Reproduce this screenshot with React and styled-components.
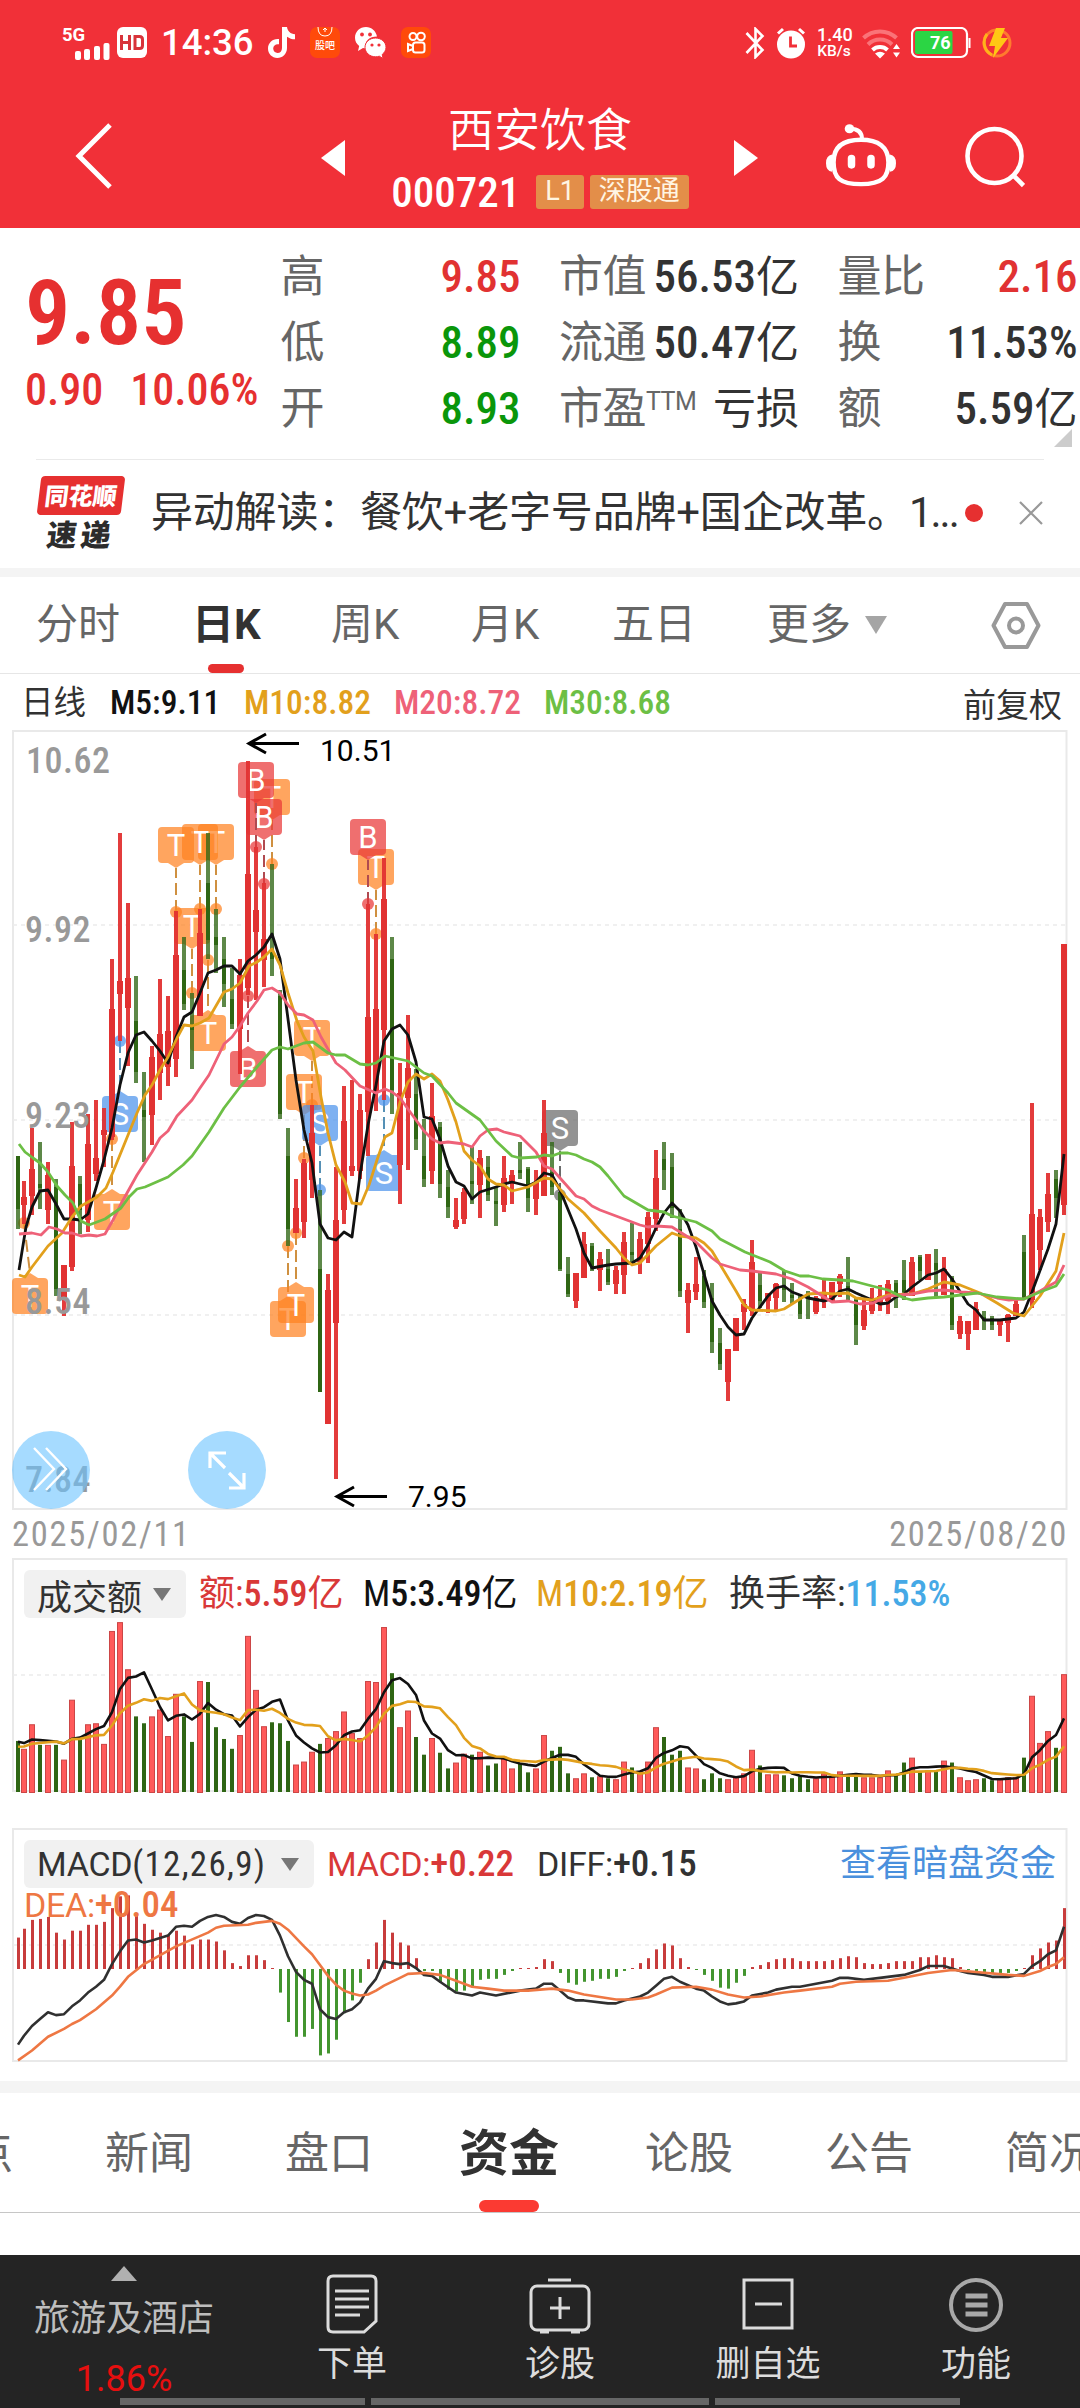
import React, { useState } from "react";
import styled, { createGlobalStyle } from "styled-components";

const GlobalStyle = createGlobalStyle`
  * { box-sizing: border-box; }
  body {
    margin: 0;
    background: #fff;
    font-family: "Roboto", "Noto Sans CJK SC", sans-serif;
  }
`;

const UP = "#e13232";
const DOWN = "#2f6614";

// one row per day: [rising, high, body top, body bottom, low]
const candles = [
  [0, 1156, 1156, 1209, 1229], [1, 1181, 1197, 1205, 1224], [1, 1128, 1169, 1196, 1215], [0, 1142, 1184, 1188, 1209],
  [1, 1162, 1175, 1210, 1224], [0, 1179, 1187, 1289, 1296], [1, 1265, 1265, 1298, 1316], [1, 1122, 1166, 1267, 1271],
  [0, 1176, 1184, 1210, 1234], [1, 1114, 1144, 1220, 1232], [1, 1100, 1158, 1174, 1181], [1, 1108, 1130, 1135, 1167],
  [1, 959, 1009, 1137, 1140], [1, 833, 981, 994, 1041], [1, 903, 978, 1008, 1066], [0, 976, 1021, 1072, 1083],
  [0, 1072, 1110, 1117, 1162], [1, 1046, 1057, 1115, 1145], [1, 979, 1034, 1073, 1100], [1, 996, 1031, 1067, 1086],
  [1, 911, 955, 1059, 1077], [0, 937, 970, 1004, 1010], [0, 993, 1025, 1030, 1069], [1, 909, 933, 1016, 1016],
  [0, 833, 883, 940, 959], [0, 909, 937, 945, 973], [0, 937, 959, 984, 1007], [0, 968, 999, 1024, 1029],
  [1, 959, 975, 1029, 1074], [1, 761, 874, 988, 995], [1, 847, 910, 932, 1000], [1, 883, 939, 960, 987],
  [0, 864, 950, 959, 976], [0, 990, 996, 1114, 1119], [0, 1128, 1156, 1229, 1246], [1, 1179, 1208, 1233, 1233],
  [1, 1159, 1163, 1222, 1238], [1, 1105, 1133, 1180, 1198], [0, 1190, 1269, 1392, 1392], [1, 1274, 1290, 1424, 1424],
  [1, 1167, 1220, 1323, 1479], [1, 1086, 1121, 1210, 1224], [1, 1080, 1166, 1171, 1176], [1, 1094, 1110, 1171, 1179],
  [1, 904, 1017, 1112, 1156], [1, 934, 1009, 1093, 1111], [1, 858, 899, 1030, 1100], [0, 937, 959, 1090, 1114],
  [1, 1063, 1093, 1165, 1204], [1, 1015, 1068, 1098, 1170], [0, 1069, 1094, 1139, 1150], [0, 1119, 1156, 1179, 1187],
  [1, 1083, 1116, 1171, 1184], [0, 1122, 1127, 1184, 1198], [0, 1170, 1187, 1207, 1218], [1, 1198, 1220, 1227, 1229],
  [1, 1188, 1192, 1219, 1224], [0, 1147, 1181, 1184, 1204], [1, 1150, 1158, 1185, 1218], [0, 1156, 1167, 1195, 1201],
  [0, 1187, 1201, 1204, 1226], [1, 1156, 1178, 1205, 1212], [1, 1170, 1175, 1184, 1204], [0, 1142, 1170, 1173, 1179],
  [0, 1167, 1169, 1198, 1212], [1, 1170, 1182, 1199, 1215], [1, 1100, 1133, 1196, 1196], [0, 1142, 1172, 1187, 1195],
  [0, 1192, 1192, 1269, 1271], [0, 1257, 1274, 1294, 1297], [1, 1273, 1273, 1301, 1308], [1, 1232, 1244, 1278, 1278],
  [0, 1243, 1246, 1266, 1271], [1, 1252, 1259, 1270, 1291], [0, 1249, 1269, 1282, 1285], [1, 1266, 1270, 1284, 1294],
  [1, 1232, 1242, 1275, 1294], [0, 1223, 1252, 1255, 1262], [1, 1232, 1239, 1262, 1274], [1, 1212, 1217, 1244, 1263],
  [1, 1150, 1178, 1219, 1231], [0, 1142, 1159, 1170, 1190], [0, 1153, 1167, 1208, 1218], [0, 1209, 1229, 1291, 1297],
  [1, 1283, 1290, 1303, 1333], [1, 1257, 1284, 1292, 1300], [0, 1270, 1276, 1302, 1308], [0, 1283, 1298, 1342, 1353],
  [0, 1328, 1343, 1364, 1370], [1, 1349, 1349, 1382, 1401], [1, 1318, 1318, 1351, 1351], [1, 1299, 1304, 1312, 1330],
  [1, 1240, 1262, 1311, 1316], [0, 1271, 1285, 1301, 1308], [1, 1293, 1293, 1301, 1313], [1, 1283, 1284, 1298, 1310],
  [0, 1271, 1285, 1290, 1302], [0, 1283, 1295, 1298, 1304], [0, 1294, 1298, 1314, 1319], [0, 1291, 1295, 1299, 1319],
  [1, 1296, 1298, 1312, 1314], [1, 1280, 1292, 1302, 1308], [1, 1282, 1282, 1302, 1302], [1, 1274, 1276, 1284, 1297],
  [0, 1257, 1286, 1289, 1300], [0, 1298, 1300, 1325, 1345], [1, 1300, 1310, 1326, 1330], [1, 1288, 1298, 1311, 1314],
  [1, 1285, 1296, 1304, 1311], [1, 1280, 1284, 1301, 1314], [0, 1280, 1283, 1296, 1308], [0, 1260, 1280, 1292, 1300],
  [1, 1257, 1262, 1296, 1296], [0, 1255, 1257, 1271, 1280], [1, 1254, 1254, 1280, 1280], [0, 1249, 1263, 1270, 1298],
  [1, 1257, 1269, 1295, 1295], [0, 1276, 1278, 1325, 1330], [1, 1316, 1321, 1334, 1339], [1, 1321, 1321, 1334, 1350],
  [1, 1302, 1309, 1330, 1330], [0, 1311, 1317, 1321, 1330], [0, 1316, 1318, 1325, 1330], [1, 1320, 1321, 1325, 1336],
  [1, 1314, 1315, 1323, 1342], [1, 1300, 1304, 1316, 1316], [0, 1235, 1252, 1298, 1298], [1, 1103, 1214, 1300, 1308],
  [1, 1209, 1217, 1250, 1270], [1, 1173, 1194, 1222, 1232], [0, 1170, 1179, 1198, 1218], [1, 944, 944, 1205, 1215],
];

const priceLines = [
  ["#111", "19,1270 26,1227 32,1207 40,1191 48,1190 56,1204 64,1219 72,1219 80,1220 88,1214 96,1188 104,1160 112,1128 120,1085 128,1053 136,1035 144,1032 152,1041 160,1051 168,1063 176,1037 184,1017 192,1012 200,993 208,973 216,970 224,966 232,966 240,974 248,961 256,955 264,947 272,934 280,959 288,1019 296,1080 304,1130 312,1163 320,1224 328,1238 336,1240 344,1232 352,1237 360,1175 368,1125 376,1085 384,1041 392,1029 400,1025 408,1035 416,1062 424,1117 432,1119 440,1139 448,1166 456,1182 464,1186 472,1199 480,1192 496,1187 504,1184 512,1182 520,1184 528,1186 536,1182 544,1173 552,1175 560,1190 576,1229 584,1253 592,1268 608,1265 616,1264 632,1263 640,1258 648,1245 656,1228 664,1213 672,1203 680,1211 688,1225 696,1247 704,1274 712,1301 720,1315 728,1327 736,1335 744,1334 752,1318 760,1307 768,1296 776,1288 784,1286 792,1292 808,1298 824,1301 832,1299 840,1291 848,1289 856,1293 872,1300 880,1304 888,1303 896,1297 904,1294 912,1287 928,1275 936,1273 944,1269 952,1279 968,1304 976,1310 984,1320 1000,1320 1016,1318 1024,1312 1032,1292 1048,1249 1056,1224 1064,1154"],
  ["#e2a01c", "19,1275 25,1277 32,1267 48,1246 62,1233 72,1217 81,1206 97,1197 106,1188 113,1172 137,1113 145,1095 152,1085 160,1070 168,1057 177,1038 184,1025 192,1026 200,1023 209,1018 224,992 232,989 240,983 249,966 257,962 264,957 272,949 280,965 288,993 297,1021 304,1037 313,1051 321,1097 328,1133 336,1165 345,1182 352,1203 361,1204 369,1185 377,1160 385,1137 392,1133 400,1102 408,1082 416,1074 424,1079 432,1074 440,1081 448,1100 456,1122 464,1151 472,1160 480,1166 488,1179 496,1184 504,1185 512,1191 528,1187 544,1178 552,1179 560,1189 568,1199 584,1213 600,1231 616,1248 624,1258 632,1265 640,1263 656,1246 672,1233 680,1236 696,1238 704,1243 712,1251 736,1291 744,1305 752,1310 776,1311 784,1309 800,1299 808,1294 824,1293 832,1294 848,1293 856,1298 872,1300 888,1295 912,1294 928,1289 944,1282 960,1285 980,1293 997,1303 1013,1313 1024,1316 1040,1296 1056,1271 1064,1233"],
  ["#ee6178", "19,1234 32,1233 41,1235 49,1227 57,1229 65,1233 72,1233 81,1236 89,1235 97,1236 105,1234 113,1220 122,1202 137,1175 152,1152 160,1138 168,1131 177,1116 192,1100 200,1088 209,1075 224,1044 232,1037 240,1026 248,1013 257,1001 264,990 272,988 280,993 288,1005 297,1014 304,1015 313,1020 321,1037 336,1063 345,1070 360,1086 376,1093 385,1089 392,1092 400,1098 424,1131 432,1139 440,1143 448,1142 464,1144 472,1147 480,1136 488,1130 497,1129 504,1132 520,1136 536,1152 544,1166 552,1169 560,1178 576,1196 584,1199 592,1206 600,1210 616,1216 632,1222 640,1225 648,1227 656,1226 672,1227 696,1242 712,1258 720,1264 740,1270 752,1271 776,1274 792,1279 808,1287 824,1297 832,1302 848,1301 860,1304 873,1303 888,1296 912,1294 928,1291 944,1290 961,1292 977,1293 997,1298 1009,1300 1024,1299 1040,1291 1056,1282 1064,1265"],
  ["#6cbf45", "19,1144 25,1152 33,1158 40,1163 48,1172 57,1186 65,1195 73,1203 81,1221 89,1225 97,1222 105,1219 121,1208 129,1197 137,1189 145,1187 168,1177 183,1165 192,1156 209,1132 224,1108 240,1087 257,1067 272,1050 280,1047 288,1049 304,1043 313,1042 328,1053 336,1055 345,1055 360,1064 368,1065 376,1063 385,1056 408,1061 424,1073 432,1076 448,1093 456,1103 480,1120 496,1141 512,1156 520,1158 537,1157 544,1155 552,1156 560,1153 568,1153 576,1155 584,1159 592,1162 600,1167 608,1176 624,1196 648,1210 664,1212 672,1216 688,1220 696,1222 712,1231 720,1239 745,1252 760,1258 770,1262 785,1271 800,1276 809,1276 823,1279 840,1280 853,1281 872,1286 888,1290 896,1294 904,1298 912,1300 928,1298 944,1297 961,1295 977,1293 997,1297 1024,1299 1040,1292 1056,1286 1064,1274"],
];

// trade markers: [letter, x of the box centre, top of the box, x and y of the dot]
const markers = [
  ["G", 560, 1110, 560, 1195], ["T", 376, 849, 376, 934], ["B", 368, 819, 368, 904],
  ["S", 384, 1155, 384, 1100], ["T", 312, 1020, 312, 1105], ["T", 304, 1074, 304, 1158],
  ["S", 320, 1105, 320, 1190], ["T", 272, 779, 272, 864], ["B", 264, 799, 264, 884],
  ["B", 256, 762, 256, 847], ["B", 248, 1051, 248, 996], ["T", 216, 824, 216, 909],
  ["T", 200, 824, 200, 909], ["T", 192, 908, 192, 993], ["T", 176, 827, 176, 912],
  ["T", 208, 1015, 208, 960], ["S", 120, 1096, 120, 1041], ["T", 112, 1194, 112, 1139],
  ["T", 30, 1278, 24, 1223], ["T", 288, 1301, 288, 1246], ["T", 296, 1287, 296, 1233],
];

const markerColors = {
  T: ["#ff8322", "#cf9040"],
  B: ["#ea3838", "#b04a50"],
  S: ["#4d94ec", "#5590b5"],
  G: ["#6a6a6a", "#6a6a6a"],
};

const volumes = [
  52, 44, 69, 48, 48, 48, 33, 94, 54, 69, 70, 49, 164, 173, 125, 77, 70, 77, 84, 57, 100, 77, 51, 113, 112, 66, 54, 44,
  58, 159, 104, 67, 71, 70, 52, 28, 31, 41, 49, 55, 62, 82, 60, 55, 113, 112, 168, 121, 66, 83, 56, 38, 55, 40, 24, 30,
  39, 38, 41, 27, 29, 36, 24, 29, 20, 24, 58, 42, 46, 19, 14, 19, 15, 16, 14, 13, 31, 25, 21, 31, 66, 56, 38, 42, 25, 24,
  13, 19, 14, 13, 16, 19, 43, 27, 18, 18, 17, 14, 16, 13, 14, 19, 16, 21, 18, 18, 15, 15, 15, 22, 18, 30, 35, 21, 22, 21,
  32, 30, 15, 12, 13, 14, 12, 14, 15, 15, 35, 98, 50, 62, 45, 120,
];
const earlierVolumes = [41, 41, 41, 41, 41, 51, 51, 51, 51];

const macdBars = [
  32, 41, 50, 51, 53, 37, 30, 39, 39, 45, 45, 48, 62, 74, 75, 55, 46, 40, 37, 35, 39, 34, 25, 30, 30, 28, 19, 6, 3, 14, 14,
  9, 1, -24, -54, -69, -69, -61, -88, -86, -72, -45, -32, -14, 10, 27, 50, 37, 27, 24, 11, -2, -2, -14, -21, -23, -22, -18,
  -11, -10, -10, -6, -2, 1, 1, 2, 10, 8, -4, -14, -16, -13, -12, -10, -10, -8, -2, 1, 6, 11, 20, 26, 24, 11, 2, -1, -6,
  -12, -19, -20, -14, -7, 2, 4, 7, 10, 11, 11, 8, 8, 8, 8, 9, 11, 13, 12, 6, 5, 5, 6, 8, 8, 8, 12, 12, 14, 12, 11, 2, -1,
  -2, -3, -4, -4, -4, -2, 1, 14, 21, 27, 29, 62,
];

// [day, value] pairs
const diff = [
  [0, -77], [1, -68], [2, -58], [3, -51], [4, -44], [5, -47], [6, -46], [7, -38], [8, -32], [9, -24], [10, -18], [11, -11],
  [12, 5], [13, 18], [14, 29], [15, 30], [16, 27], [17, 29], [19, 34], [20, 43], [21, 44], [22, 43], [23, 49], [24, 53],
  [25, 55], [26, 53], [27, 48], [28, 46], [29, 52], [30, 55], [31, 54], [32, 50], [33, 34], [34, 13], [35, -3], [36, -11],
  [37, -15], [38, -41], [39, -49], [40, -51], [41, -44], [42, -41], [43, -34], [44, -20], [45, -10], [46, 8], [47, 6],
  [48, 5], [49, 6], [50, 1], [51, -6], [52, -7], [53, -13], [55, -24], [57, -27], [58, -24], [60, -27], [63, -22],
  [65, -20], [66, -15], [67, -15], [68, -22], [69, -29], [70, -32], [71, -32], [74, -35], [75, -35], [76, -32], [78, -28],
  [79, -24], [80, -17], [81, -10], [82, -8], [83, -13], [85, -20], [86, -22], [87, -28], [88, -33], [89, -36], [90, -35],
  [91, -33], [92, -27], [94, -24], [95, -21], [97, -18], [98, -18], [100, -15], [102, -12], [103, -9], [104, -9],
  [106, -11], [108, -9], [111, -6], [113, -1], [114, 3], [116, 3], [118, -2], [119, -4], [121, -6], [122, -8], [124, -8],
  [126, -5], [127, 3], [128, 8], [129, 15], [130, 19], [131, 43],
];
const dea = [
  [0, -93], [2, -83], [4, -69], [6, -61], [7, -56], [8, -52], [10, -41], [12, -27], [13, -18], [14, -8], [16, 5], [20, 23],
  [24, 37], [25, 42], [26, 44], [29, 45], [30, 47], [32, 49], [33, 46], [34, 40], [36, 23], [37, 15], [38, 4], [39, -7],
  [40, -16], [41, -22], [42, -25], [43, -27], [44, -26], [45, -22], [46, -17], [48, -9], [49, -5], [51, -4], [53, -6],
  [55, -12], [57, -18], [59, -20], [61, -22], [64, -22], [67, -20], [69, -22], [71, -26], [75, -31], [77, -31], [79, -29],
  [80, -26], [82, -19], [85, -18], [87, -21], [89, -26], [91, -29], [93, -28], [96, -24], [98, -22], [102, -18],
  [103, -15], [105, -13], [109, -12], [111, -9], [114, -4], [117, -1], [120, -3], [124, -6], [126, -7], [128, -2],
  [129, 2], [130, 5], [131, 12],
];

const PLOT_SCALE = 0.982;

const dayX = (i) => (i === 0 ? 18 : 16 + 8 * i);

const average = (days) => {
  const all = [...earlierVolumes, ...volumes];
  return volumes.map((_, i) => {
    const end = i + earlierVolumes.length + 1;
    return all.slice(end - days, end).reduce((a, b) => a + b, 0) / days;
  });
};

const Page = styled.div`
  width: 1080px;
  height: 2408px;
  overflow: hidden;
  display: flex;
  flex-direction: column;
  background: #fff;
`;

const Header = styled.header`
  height: 228px;
  flex: none;
  background: #f13038;
  color: #fff;
`;

const StatusBar = styled.div`
  height: 85px;
  display: flex;
  align-items: center;
  justify-content: space-between;
  padding: 0 68px 0 62px;
`;

const StatusGroup = styled.div`
  display: flex;
  align-items: center;
  gap: ${(props) => props.$gap}px;
`;

const Clock = styled.span`
  width: 92px;
  font-size: 36.5px;
  font-weight: 500;
  line-height: 40px;
  margin-left: -1px;
  white-space: nowrap;
`;

const NetSpeed = styled.span`
  width: 34px;
  font-size: 15.5px;
  font-weight: 500;
  line-height: 16px;
  text-align: center;
  white-space: nowrap;

  b {
    display: block;
    font-size: 18px;
    font-weight: 500;
    line-height: 17px;
  }
`;

const AppBadge = styled.span`
  width: 30px;
  height: 31px;
  border-radius: 7px;
  background: #ff4a0a;
  display: flex;
  flex-direction: column;
  align-items: center;
  justify-content: space-between;
  font-size: 10px;
  font-weight: 500;
  line-height: 14px;
  overflow: hidden;
  padding-bottom: 5px;
`;

const Nav = styled.nav`
  height: 143px;
  display: grid;
  grid-template-columns: 268px 130px 286px 124px 106px 162px;
  align-items: center;
  padding-bottom: 2px;
`;

const NavButton = styled.div`
  display: flex;
  justify-content: center;
  padding-right: ${(props) => props.$pad || 0}px;
`;

const TitleBlock = styled.div`
  display: flex;
  flex-direction: column;
  align-items: center;
  margin-left: -2px;
`;

const StockName = styled.div`
  font-family: "Noto Sans CJK SC", sans-serif;
  font-size: 46px;
  font-weight: 350;
  line-height: 66px;
`;

const CodeRow = styled.div`
  display: flex;
  align-items: center;
  gap: 6px;
  height: 60px;
  padding-top: 6px;
  white-space: nowrap;
`;

const Code = styled.span`
  font-family: "Roboto Condensed", "Roboto", sans-serif;
  font-size: 43px;
  font-weight: 500;
  margin-right: 10px;
`;

const Badge = styled.span`
  height: 34px;
  padding: 0 ${(props) => props.$pad}px;
  border-radius: 3px;
  background: #e38e49;
  color: #fff5e2;
  font-size: 27px;
  line-height: 33px;
`;

const QuotePanel = styled.section`
  height: 231px;
  flex: none;
  display: grid;
  grid-template-columns: 242px 240px 240px 240px;
  column-gap: 38.5px;
  padding-top: 16px;
  position: relative;
`;

const PriceBlock = styled.div`
  padding-left: 25px;
  font-family: "Roboto Condensed", "Roboto", sans-serif;
  color: #e63030;
`;

const Price = styled.div`
  font-size: 90px;
  font-weight: 600;
  line-height: 106px;
  padding-top: 17px;
`;

const Change = styled.div`
  display: flex;
  gap: 27px;
  font-size: 44px;
  font-weight: 500;
  line-height: 46px;
  white-space: nowrap;
`;

const QuoteColumn = styled.div`
  display: flex;
  flex-direction: column;
`;

const QuoteRow = styled.div`
  height: 66px;
  display: flex;
  align-items: center;
  justify-content: space-between;
  white-space: nowrap;
`;

const QuoteLabel = styled.span`
  font-size: 44px;
  line-height: 60px;
  letter-spacing: -0.5px;
  color: #666;

  sup {
    font-size: 25px;
    line-height: 0;
    vertical-align: 14px;
  }
`;

const QuoteValue = styled.span`
  font-family: "Roboto Condensed", "Roboto", "Noto Sans CJK SC", sans-serif;
  font-size: 45px;
  line-height: 60px;
  font-weight: 500;
  color: ${(props) => props.$color || "#323232"};

  i {
    font-style: normal;
    font-weight: 400;
    font-size: 43px;
  }
`;

const Corner = styled.span`
  position: absolute;
  right: 8px;
  bottom: 12px;
  border-left: 18px solid transparent;
  border-bottom: 18px solid #ccc;
`;

const NewsRow = styled.section`
  height: 109px;
  flex: none;
  margin: 0 36px;
  border-top: 1px solid #eaeaea;
  display: flex;
  align-items: center;
  padding-bottom: 2px;
`;

const NewsLogo = styled.div`
  width: 90px;
  margin-right: 25px;
  display: flex;
  flex-direction: column;
  align-items: center;
  font-family: "Noto Sans CJK SC", sans-serif;
  font-weight: 900;
`;

const LogoTop = styled.span`
  width: 84px;
  height: 39px;
  border-radius: 4px;
  background: #e63030;
  color: #fff;
  font-size: 24px;
  line-height: 37px;
  text-align: center;
  transform: skewX(-7deg);
`;

const LogoBottom = styled.span`
  color: #2c2c2c;
  font-size: 30px;
  line-height: 36px;
  letter-spacing: 4px;
  transform: skewX(-7deg);
`;

const NewsText = styled.span`
  width: 814px;
  font-size: 42px;
  line-height: 60px;
  letter-spacing: -0.2px;
  color: #323232;
  white-space: nowrap;

  span {
    letter-spacing: -2px;
  }
`;

const Dot = styled.span`
  width: 18px;
  height: 18px;
  border-radius: 50%;
  background: #e63030;
  margin-right: 36px;
`;

const Band = styled.div`
  height: ${(props) => props.$height}px;
  flex: none;
  background: #f4f4f4;
`;

const PeriodTabs = styled.div`
  height: 97px;
  flex: none;
  display: flex;
  border-bottom: 1px solid #e6e6e6;
  padding-left: 36px;
  align-items: stretch;
`;

const PeriodTab = styled.button`
  border: 0;
  background: none;
  padding: 0;
  width: ${(props) => props.$width}px;
  margin-right: ${(props) => props.$gap}px;
  font: inherit;
  font-size: 42px;
  font-weight: ${(props) => (props.$active ? 700 : 400)};
  line-height: 78px;
  color: ${(props) => (props.$active ? "#323232" : "#666")};
  display: grid;
  grid-template-rows: 87px 9px;
  justify-items: center;
  align-items: end;
  white-space: nowrap;
`;

const TabMark = styled.span`
  width: ${(props) => props.$width}px;
  height: ${(props) => props.$height}px;
  border-radius: 6px;
  background: ${(props) => props.$color};
`;

const Caret = styled.span`
  display: inline-block;
  border-left: ${(props) => props.$size}px solid transparent;
  border-right: ${(props) => props.$size}px solid transparent;
  border-top: ${(props) => props.$tall}px solid ${(props) => props.$color};
`;

const MoreTab = styled.div`
  width: 224px;
  display: flex;
  align-items: center;
  gap: 14px;
  padding-bottom: 1px;
  font-size: 42px;
  line-height: 60px;
  color: #666;
`;

const AverageRow = styled.div`
  height: 56px;
  flex: none;
  display: flex;
  align-items: center;
  padding: 2px 18px 0 21px;
  font-size: 33px;
  color: #323232;
  white-space: nowrap;
`;

const Legend = styled.span`
  font-family: "Roboto Condensed", "Roboto", "Noto Sans CJK SC", sans-serif;
  font-size: ${(props) => props.$size || 33.5}px;
  font-weight: ${(props) => props.$weight || 400};
  line-height: ${(props) => props.$line || 48}px;
  width: ${(props) => props.$width}px;
  color: ${(props) => props.$color};
  white-space: nowrap;

  b {
    font-weight: 500;
  }
`;

// indicator names are set wider than their figures
const Name = styled.span`
  font-family: "Roboto", sans-serif;
  font-size: 34px;
  letter-spacing: -0.3px;
`;

const Turnover = styled.b`
  color: #45a9e6;
`;

const AdjustMode = styled.span`
  margin-left: auto;
`;

// the plot and what stands over it share a single grid cell
const Frame = styled.div`
  height: ${(props) => props.$height}px;
  flex: none;
  margin: 0 12px ${(props) => props.$below || 0}px;
  display: grid;

  > * {
    grid-area: 1 / 1;
  }
`;

const Plot = styled.svg`
  display: block;
  width: 1056px;
  height: ${(props) => props.$height}px;
  overflow: visible;
`;

const ChartTools = styled.div`
  display: flex;
  align-items: flex-end;
  gap: 98px;
`;

const RoundTool = styled.div`
  width: 78px;
  height: 78px;
  border-radius: 50%;
  background: rgba(107, 195, 255, 0.6);
`;

const DateRow = styled.div`
  height: 49px;
  flex: none;
  display: flex;
  justify-content: space-between;
  align-items: center;
  padding: 1px 12px 0 12px;
  font-family: "Roboto Condensed", "Roboto", sans-serif;
  font-size: 34.5px;
  letter-spacing: 1.7px;
  color: #999;
`;

const PlotHeader = styled.div`
  display: flex;
  flex-wrap: wrap;
  align-content: flex-start;
  align-items: center;
  padding: 12px 0 0 12px;
  height: 100px;
`;

const Picker = styled.div`
  width: ${(props) => props.$width}px;
  height: 48px;
  margin-right: 13px;
  padding: 0 15px 0 13px;
  border-radius: 6px;
  background: #f1f1f1;
  display: flex;
  align-items: center;
  justify-content: space-between;
  font-size: 35px;
  color: #323232;
  white-space: nowrap;
`;

const Params = styled.span`
  font-family: "Roboto Condensed", "Roboto", sans-serif;
  letter-spacing: 1.3px;
  margin-right: auto;
`;

const PlotLink = styled.span`
  margin-left: auto;
  margin-right: 12px;
  font-size: 36px;
  line-height: 40px;
  color: #4a90dd;
`;

const SectionTabs = styled.div`
  height: 120px;
  flex: none;
  display: flex;
  gap: 92px;
  border-bottom: 1px solid #c6c6c6;
`;

const SectionTab = styled.div`
  flex: none;
  margin: 0 ${(props) => (props.$active ? -6 : 0)}px 0 ${(props) => props.$shift || 0}px;
  font-size: ${(props) => (props.$active ? 50 : 44)}px;
  font-weight: ${(props) => (props.$active ? 700 : 400)};
  color: ${(props) => (props.$active ? "#323232" : "#666")};
  display: grid;
  grid-template-rows: 107px 12px;
  align-items: end;
  justify-items: center;
  line-height: 92px;
`;

const BottomBar = styled.footer`
  height: 153px;
  flex: none;
  margin-top: auto;
  background: #242424;
  display: grid;
  grid-template-columns: 248px repeat(4, 208px);
  position: relative;
`;

const Sector = styled.div`
  display: flex;
  flex-direction: column;
  align-items: center;
  font-size: 36px;
  line-height: 50px;
  color: #bdbdbd;
  padding-top: 11px;

  svg {
    margin-bottom: 13px;
  }

  em {
    margin-top: 12px;
    font-style: normal;
    font-size: 36px;
    line-height: 46px;
    color: #e60f0f;
  }
`;

const Action = styled.div`
  display: flex;
  flex-direction: column;
  align-items: center;
  padding-top: 19px;
  gap: 6px;
  font-size: 35px;
  line-height: 50px;
  color: #dcdcdc;
`;

const GestureBar = styled.div`
  position: absolute;
  left: 120px;
  bottom: 3px;
  width: 840px;
  height: 7px;
  display: grid;
  grid-template-columns: 245px 338px 245px;
  justify-content: space-between;

  span {
    background: #666;
  }
`;

const quotes = [
  [["高", "9.85", "#e13232"], ["低", "8.89", "#0a960a"], ["开", "8.93", "#0a960a"]],
  [["市值", "56.53亿"], ["流通", "50.47亿"], ["市盈", "亏损"]],
  [["量比", "2.16", "#e13232"], ["换", "11.53%"], ["额", "5.59亿"]],
];

const periods = [
  ["分时", 84, 72],
  ["日K", 68, 71],
  ["周K", 68, 72],
  ["月K", 68, 73],
  ["五日", 84, 71],
];

const SignalIcon = () => (
  <svg width="50" height="36" viewBox="0 0 50 36">
    <text x="0" y="16" fill="#fff" fontSize="18.500" fontWeight="700" fontFamily="Roboto">5G</text>
    <g fill="#fff">
      <rect x="13" y="26" width="6" height="9" rx="2" />
      <rect x="22" y="24" width="6" height="11" rx="2" />
      <rect x="32" y="21" width="6" height="14" rx="2" />
      <rect x="41.500" y="18" width="6" height="17" rx="2" />
    </g>
  </svg>
);

const HdIcon = () => (
  <svg width="30" height="31" viewBox="0 0 30 31">
    <rect width="30" height="31" rx="6" fill="#fff" />
    <path d="M4.500 8v15M12.500 8v15M4.500 15.500h8M18 9.500h4.500q3 0 3 3v6q0 3-3 3H18z" fill="none" stroke="#d8333a" strokeWidth="3" />
  </svg>
);

const TiktokIcon = () => (
  <svg width="27" height="32" viewBox="0 0 27 32">
    <path d="M14 0h5c.5 4 3.500 7 8 7.300v5c-3 0-5.500-.9-8-2.600V21c0 6-4.500 10-9.700 10C4 31 0 27 0 21.600c0-6 5-10.300 11-9.500v5.200c-3-.7-5.800 1.200-5.800 4.200 0 2.600 2 4.400 4.300 4.400 2.700 0 4.500-2 4.500-5z" fill="#fff" />
  </svg>
);

const WechatIcon = () => (
  <svg width="31" height="32" viewBox="0 0 31 32">
    <path d="M11 0C4.800 0 0 4.700 0 10.700c0 3.500 1.600 6.200 4.200 8.200L3 24l5-3 2.500.4C9 14 14.500 9.500 22 9.500 21 4 16.500 0 11 0z" fill="#fff" />
    <path d="M20.500 11C14.700 11 10 15 10 20.300s4.700 9.500 10.500 9.500c1.400 0 2.600-.2 3.800-.6l3.700 2.300-.8-4c2.300-1.800 3.800-4.300 3.800-7.200 0-5.300-4.700-9.300-10.500-9.300z" fill="#fff" stroke="#f13038" strokeWidth="1" />
    <g fill="#f13038">
      <circle cx="7" cy="7.500" r="1.900" /><circle cx="15" cy="7.500" r="1.900" />
      <circle cx="17" cy="18" r="1.600" /><circle cx="24" cy="18" r="1.600" />
    </g>
  </svg>
);

const KuaishouIcon = () => (
  <svg width="30" height="31" viewBox="0 0 30 31">
    <rect width="30" height="31" rx="7" fill="#ff4a0a" />
    <g fill="none" stroke="#fff" strokeWidth="2">
      <circle cx="12" cy="9.500" r="3.500" /><circle cx="20" cy="9.500" r="3.800" />
      <rect x="12" y="15.500" width="11.500" height="10" rx="2.500" />
      <path d="M12 19l-5-2v7l5-2" />
    </g>
  </svg>
);

const StatusIcons = () => (
  <>
    <svg width="20" height="32" viewBox="0 0 20 32">
      <path d="M1.500 6l16 17-7 7V2l7 7L1.500 26" fill="none" stroke="#fff" strokeWidth="2.600" />
    </svg>
    <svg width="30" height="32" viewBox="0 0 30 32">
      <circle cx="15" cy="17.500" r="14" fill="#fff" />
      <path d="M2 6.500l5-4.500M28 6.500L23 2" stroke="#fff" strokeWidth="3" />
      <path d="M14.500 9.500v9.500h6.500" fill="none" stroke="#f13038" strokeWidth="2.800" />
    </svg>
    <NetSpeed><b>1.40</b>KB/s</NetSpeed>
    <svg width="38" height="32" viewBox="0 0 38 32">
      <g fill="none" strokeWidth="4">
        <path d="M1.500 11a24 24 0 0 1 33 0M6 17.500a17 17 0 0 1 24 0" stroke="#fa7378" />
        <path d="M10.500 23a11 11 0 0 1 15 0" stroke="#fff" />
      </g>
      <path d="M13 26.500q5-3.500 10 0l-5 5zM31 22l3.500-5 3.500 5zM31 25.500h7l-3.500 5z" fill="#fff" />
    </svg>
    <svg width="60" height="32" viewBox="0 0 60 32">
      <rect x="1" y="1" width="55" height="29" rx="6" fill="none" stroke="#fff" strokeWidth="2.200" />
      <rect x="4" y="4" width="37.500" height="23" rx="2" fill="#2bd544" />
      <path d="M58.500 11v10" stroke="#fff" strokeWidth="2" />
      <text x="19" y="22" fontSize="18" fontWeight="700" fill="#fff" fontFamily="Roboto">76</text>
    </svg>
    <svg width="30" height="32" viewBox="0 0 30 32">
      <circle cx="15" cy="16" r="13" fill="none" stroke="#ff7a2e" strokeWidth="3" />
      <path d="M14 1h9l-4 10h7L11 31l2-12H7z" fill="#ffc814" />
      <path d="M5 7a14 14 0 0 0 5 21" fill="none" stroke="#ffb31a" strokeWidth="3" />
    </svg>
  </>
);

const RobotIcon = () => (
  <svg width="70" height="63" viewBox="0 0 70 66" preserveAspectRatio="none">
    <circle cx="23.500" cy="5" r="4.800" fill="#fff" />
    <path d="M24 5c8 0 12 3.500 12 11" fill="none" stroke="#fff" strokeWidth="4" />
    <path d="M35 16.500c-17 0-27.500 7-27.500 23.500S14 63 35 63s27.500-7 27.500-23S52 16.500 35 16.500z" fill="none" stroke="#fff" strokeWidth="4.600" />
    <path d="M6 32q-6 1-6 9t6 9zM64 32q6 1 6 9t-6 9z" fill="#fff" />
    <path d="M25.500 36v7M45 36v7" stroke="#fff" strokeWidth="7.500" strokeLinecap="round" />
  </svg>
);

function Marker({ data }) {
  const [kind, x, top, dotX, dotY] = data;
  const [fill, dash] = markerColors[kind];
  const below = dotY < top;
  const edge = below ? top : top + 36;
  const tip = below ? top - 5 : top + 41;
  return (
    <g>
      <line x1={dotX} y1={dotY} x2={x} y2={tip} stroke={dash} strokeWidth="2" strokeDasharray="12 5" />
      <g fill={fill} opacity="0.72">
        <circle cx={dotX} cy={dotY} r="6" />
        <rect x={x - 18} y={top} width="36" height="36" rx="4" />
        <path d={`M${x - 8} ${edge}L${x} ${tip}L${x + 8} ${edge}z`} />
      </g>
      <text x={x} y={top + 29} textAnchor="middle" fontSize="31" fill="#fff" fontFamily="Roboto">
        {kind === "G" ? "S" : kind}
      </text>
    </g>
  );
}

function PriceChart() {
  return (
    <Plot $height={779} viewBox="12 730 1056 779">
      <rect x="13" y="731" width="1053.500" height="778" fill="none" stroke="#e9e9e9" strokeWidth="2" />
      {[925, 1120, 1315].map((y) => (
        <line key={y} x1="13" x2="1066" y1={y} y2={y} stroke="#ececec" strokeWidth="1.500" strokeDasharray="4 4" />
      ))}
      {markers.map((m, i) => (
        <Marker key={i} data={m} />
      ))}
      {candles.map(([up, high, top, bottom, low], i) => {
        const x = dayX(i);
        const color = up ? UP : DOWN;
        return (
          <g key={i} fill={color}>
            <rect x={x - 2} y={high} width="4" height={low - high} opacity={up ? 0.95 : 0.78} />
            <rect x={x - (up ? 3 : 2)} y={top} width={up ? 6 : 4} height={bottom - top} />
          </g>
        );
      })}
      {priceLines.map(([color, points]) => (
        <polyline key={color} points={points} fill="none" stroke={color} strokeWidth="2.800" strokeLinejoin="round" />
      ))}
      <g fill="#999" fontFamily="Roboto Condensed, Roboto" fontSize="36" fontWeight="500" letterSpacing="0.500">
        <text x="26" y="773">10.62</text>
        <text x="25" y="942">9.92</text>
        <text x="25" y="1128">9.23</text>
        <text x="25" y="1314">8.54</text>
        <text x="25" y="1492">7.84</text>
      </g>
      <g fill="none" stroke="#000" strokeWidth="3">
        <path d="M299 743.500H249M266 734l-17 9.500 17 9.500" />
        <path d="M387 1496.500H337M354 1487l-17 9.500 17 9.500" />
      </g>
      <g fontFamily="Roboto" fontSize="30" fill="#000">
        <text x="320" y="761">10.51</text>
        <text x="408" y="1507">7.95</text>
      </g>
    </Plot>
  );
}

function VolumeChart() {
  const base = 234;
  const line = (values) => values.map((v, i) => `${dayX(i)},${base - v * PLOT_SCALE}`).join(" ");
  return (
    <Plot $height={234} viewBox="12 0 1056 234">
      <rect x="13" y="1" width="1053.500" height="232" fill="none" stroke="#e9e9e9" strokeWidth="2" />
      <line x1="13" x2="1066" y1="117" y2="117" stroke="#ececec" strokeWidth="1.500" strokeDasharray="4 4" />
      {volumes.map((v, i) => {
        const tall = v * PLOT_SCALE;
        return candles[i][0] ? (
          <rect key={i} x={dayX(i) - 2.5} y={base - tall + 0.5} width="5" height={tall} fill="#ff5a5a" stroke="#cc4646" strokeWidth="1" />
        ) : (
          <rect key={i} x={dayX(i) - 2} y={base - tall} width="4" height={tall} fill={DOWN} />
        );
      })}
      <g fill="none" strokeWidth="2.600" strokeLinejoin="round">
        <polyline points={line(average(5))} stroke="#111" />
        <polyline points={line(average(10))} stroke="#e2a01c" />
      </g>
    </Plot>
  );
}

function MacdChart() {
  const zero = 141;
  const line = (pairs) => pairs.map(([i, v]) => `${dayX(i)},${zero - v * PLOT_SCALE}`).join(" ");
  return (
    <Plot $height={234} viewBox="12 0 1056 234">
      <rect x="13" y="1" width="1053.500" height="232" fill="none" stroke="#e9e9e9" strokeWidth="2" />
      <line x1="13" x2="1066" y1="117" y2="117" stroke="#ececec" strokeWidth="1.500" strokeDasharray="4 4" />
      {macdBars.map((v, i) => (
        <rect
          key={i}
          x={dayX(i) - 1}
          y={v > 0 ? zero - v * PLOT_SCALE : zero}
          width="3"
          height={Math.abs(v) * PLOT_SCALE}
          fill={v > 0 ? "#c83c3c" : "#43952f"}
        />
      ))}
      <g fill="none" strokeWidth="2.600" strokeLinejoin="round">
        <polyline points={line(diff)} stroke="#303030" />
        <polyline points={line(dea)} stroke="#ee7743" />
      </g>
    </Plot>
  );
}

const actionIcons = [
  <svg width="52" height="60" viewBox="0 0 52 60" fill="none" stroke="#dcdcdc" strokeWidth="3">
    <path d="M7 2h38q5 0 5 5v40L38 58H7q-5 0-5-5V7q0-5 5-5z" />
    <path d="M9 17h34M9 25h34M9 33h34M9 41h25" />
  </svg>,
  <svg width="62" height="60" viewBox="0 0 62 60" fill="none" stroke="#dcdcdc" strokeWidth="3">
    <rect x="2" y="12" width="58" height="44" rx="6" />
    <path d="M19 6h23M11 58h9M42 58h9M31 23v22M21 34h20" />
  </svg>,
  <svg width="52" height="60" viewBox="0 0 52 60" fill="none" stroke="#dcdcdc" strokeWidth="3">
    <rect x="2" y="6" width="48" height="48" />
    <path d="M13 30h27" />
  </svg>,
  <svg width="56" height="60" viewBox="0 0 56 60" fill="none" stroke="#a8a8a8">
    <circle cx="28" cy="31" r="25" strokeWidth="4" />
    <path d="M17.500 22h22M17.500 31h22M17.500 40h22" strokeWidth="5" />
  </svg>,
];

export default function App() {
  const [period, setPeriod] = useState("日K");

  return (
    <Page>
      <GlobalStyle />
      <Header>
        <StatusBar>
          <StatusGroup $gap={15}>
            <StatusGroup $gap={5}>
              <SignalIcon />
              <HdIcon />
            </StatusGroup>
            <Clock>14:36</Clock>
            <TiktokIcon />
            <AppBadge>
              <svg width="16" height="11" viewBox="0 0 16 11" fill="none" stroke="#fff">
                <path d="M1 0q0 9 7 9t7-9M8 1v4M6 3l2-2 2 2" />
              </svg>
              股吧
            </AppBadge>
            <WechatIcon />
            <KuaishouIcon />
          </StatusGroup>
          <StatusGroup $gap={11}>
            <StatusIcons />
          </StatusGroup>
        </StatusBar>
        <Nav>
          <NavButton $pad={80}>
            <svg width="38" height="68" viewBox="0 0 38 68">
              <path d="M35 3L4 34l31 31" fill="none" stroke="#fff" strokeWidth="5" />
            </svg>
          </NavButton>
          <NavButton>
            <svg width="24" height="42" viewBox="0 0 24 42"><path d="M24 5v36L0 23z" fill="#fff" /></svg>
          </NavButton>
          <TitleBlock>
            <StockName>西安饮食</StockName>
            <CodeRow>
              <Code>000721</Code>
              <Badge $pad={9}>L1</Badge>
              <Badge $pad={9}>深股通</Badge>
            </CodeRow>
          </TitleBlock>
          <NavButton>
            <svg width="24" height="42" viewBox="0 0 24 42"><path d="M0 5v36l24-18z" fill="#fff" /></svg>
          </NavButton>
          <NavButton>
            <RobotIcon />
          </NavButton>
          <NavButton>
            <svg width="60" height="64" viewBox="0 0 60 64" fill="none" stroke="#fff" strokeWidth="4.600">
              <circle cx="29.500" cy="32" r="27" />
              <path d="M48.500 51.500l10 10" />
            </svg>
          </NavButton>
        </Nav>
      </Header>

      <QuotePanel>
        <PriceBlock>
          <Price>9.85</Price>
          <Change>
            <span>0.90</span>
            <span>10.06%</span>
          </Change>
        </PriceBlock>
        {quotes.map((column, c) => (
          <QuoteColumn key={c}>
            {column.map(([label, value, color]) => (
              <QuoteRow key={label}>
                <QuoteLabel>
                  {label}
                  {label === "市盈" && <sup>TTM</sup>}
                </QuoteLabel>
                <QuoteValue $color={color}>
                  {value.replace(/[亿亏损]+/, "")}
                  <i>{(value.match(/[亿亏损]+/) || [""])[0]}</i>
                </QuoteValue>
              </QuoteRow>
            ))}
          </QuoteColumn>
        ))}
        <Corner />
      </QuotePanel>

      <NewsRow>
        <NewsLogo>
          <LogoTop>同花顺</LogoTop>
          <LogoBottom>速递</LogoBottom>
        </NewsLogo>
        <NewsText>
          异动解读：餐饮+老字号品牌+国企改革。<span>1...</span>
        </NewsText>
        <Dot />
        <svg width="24" height="24" viewBox="0 0 24 24" stroke="#999" strokeWidth="2.200">
          <path d="M1 1l22 22M23 1L1 23" />
        </svg>
      </NewsRow>
      <Band $height={9} />

      <PeriodTabs>
        {periods.map(([name, width, gap]) => (
          <PeriodTab key={name} $width={width} $gap={gap} $active={name === period} onClick={() => setPeriod(name)}>
            {name}
            {name === period && <TabMark $width={36} $height={9} $color="#e63030" />}
          </PeriodTab>
        ))}
        <MoreTab>
          更多
          <Caret $size={11} $tall={18} $color="#a5a5a5" />
        </MoreTab>
        <svg width="50" height="97" viewBox="0 0 50 97" fill="none" stroke="#999" strokeWidth="4">
          <path d="M14 27h22l11.500 21.500L36 70H14L2.500 48.500z" strokeLinejoin="round" />
          <circle cx="25" cy="48.500" r="7" />
        </svg>
      </PeriodTabs>

      <AverageRow>
        <Legend $size={32.5} $width={89} $color="#323232">日线</Legend>
        <Legend $width={134} $weight={500} $color="#111">M5:9.11</Legend>
        <Legend $width={150} $weight={500} $color="#e2a01c">M10:8.82</Legend>
        <Legend $width={150} $weight={500} $color="#ee6178">M20:8.72</Legend>
        <Legend $width={150} $weight={500} $color="#6cbf45">M30:8.68</Legend>
        <AdjustMode>前复权</AdjustMode>
      </AverageRow>

      <Frame $height={779}>
        <PriceChart />
        <ChartTools>
          <RoundTool>
            <svg width="78" height="78" viewBox="0 0 78 78" fill="none" stroke="#fff" strokeWidth="2.400">
              <path d="M22 17l20 21-20 21M34 17l20 21-20 21" />
            </svg>
          </RoundTool>
          <RoundTool>
            <svg width="78" height="78" viewBox="0 0 78 78" fill="none" stroke="#fff" strokeWidth="3.200">
              <path d="M37 37L22 22M22 37V22h16M41 42l15 15M56 42v15H41" />
            </svg>
          </RoundTool>
        </ChartTools>
      </Frame>
      <DateRow>
        <span>2025/02/11</span>
        <span>2025/08/20</span>
      </DateRow>

      <Frame $height={234} $below={36}>
        <VolumeChart />
        <PlotHeader>
          <Picker $width={162}>
            成交额
            <Caret $size={9} $tall={13} $color="#777" />
          </Picker>
          <Legend $size={36} $width={164} $color="#d93838">额:<b>5.59</b>亿</Legend>
          <Legend $size={36} $width={173} $color="#111">M<b>5:3.49</b>亿</Legend>
          <Legend $size={36} $width={193} $color="#e2a01c">M<b>10:2.19</b>亿</Legend>
          <Legend $size={36} $color="#323232">换手率:<Turnover>11.53%</Turnover></Legend>
        </PlotHeader>
      </Frame>

      <Frame $height={234} $below={19}>
        <MacdChart />
        <PlotHeader>
          <Picker $width={290}>
            <Name>MACD</Name>
            <Params>(12,26,9)</Params>
            <Caret $size={9} $tall={13} $color="#777" />
          </Picker>
          <Legend $size={37} $width={210} $color="#d93838"><Name>MACD:</Name><b>+0.22</b></Legend>
          <Legend $size={37} $color="#323232"><Name>DIFF:</Name><b>+0.15</b></Legend>
          <PlotLink>查看暗盘资金</PlotLink>
          <Legend $size={37} $line={33} $width={300} $color="#ee7743"><Name>DEA:</Name><b>+0.04</b></Legend>
        </PlotHeader>
      </Frame>
      <Band $height={12} />

      <SectionTabs>
        <SectionTab $shift={-31}>点</SectionTab>
        <SectionTab>新闻</SectionTab>
        <SectionTab>盘口</SectionTab>
        <SectionTab $active $shift={-6}>
          资金
          <TabMark $width={60} $height={12} $color="#fb3a32" />
        </SectionTab>
        <SectionTab>论股</SectionTab>
        <SectionTab>公告</SectionTab>
        <SectionTab>简况</SectionTab>
      </SectionTabs>

      <BottomBar>
        <Sector>
          <svg width="26" height="15" viewBox="0 0 26 15"><path d="M13 0l13 15H0z" fill="#b0b0b0" /></svg>
          旅游及酒店
          <em>1.86%</em>
        </Sector>
        {["下单", "诊股", "删自选", "功能"].map((name, i) => (
          <Action key={name}>
            {actionIcons[i]}
            {name}
          </Action>
        ))}
        <GestureBar>
          <span />
          <span />
          <span />
        </GestureBar>
      </BottomBar>
    </Page>
  );
}
